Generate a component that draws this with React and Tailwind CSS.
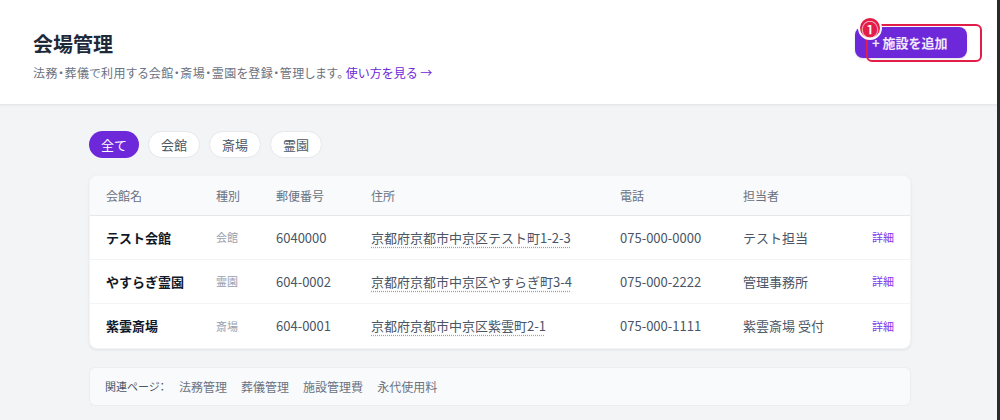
import { useState } from 'react';

const facilities = [
  {
    name: 'テスト会館',
    type: '会館',
    postal: '6040000',
    address: '京都府京都市中京区テスト町1-2-3',
    phone: '075-000-0000',
    contact: 'テスト担当',
  },
  {
    name: 'やすらぎ霊園',
    type: '霊園',
    postal: '604-0002',
    address: '京都府京都市中京区やすらぎ町3-4',
    phone: '075-000-2222',
    contact: '管理事務所',
  },
  {
    name: '紫雲斎場',
    type: '斎場',
    postal: '604-0001',
    address: '京都府京都市中京区紫雲町2-1',
    phone: '075-000-1111',
    contact: '紫雲斎場 受付',
  },
];

const filters = ['全て', '会館', '斎場', '霊園'];
const related = ['法務管理', '葬儀管理', '施設管理費', '永代使用料'];

const cols = 'grid grid-cols-[110px_60px_95px_249px_123px_1fr_auto] items-center px-4';

export default function App() {
  const [filter, setFilter] = useState('全て');

  return (
    <div
      className="relative min-h-[420px] bg-[#f3f4f6] text-gray-800"
      style={{ fontFamily: '"Noto Sans CJK JP", "Noto Sans", sans-serif' }}
    >
      {/* Header */}
      <header className="flex items-start justify-between border-b border-gray-200 bg-white pl-[33px] pr-[32px] h-[105px] shadow-[0_1px_2px_rgba(0,0,0,0.04)]">
        <div className="pt-[30px]">
          <h1 className="text-[20px] font-bold leading-7 text-gray-800">会場管理</h1>
          <p className="mt-[7px] text-[12px] leading-4 text-gray-500">
            <span className="tracking-[0.5px] [font-feature-settings:'palt']">
              法務・葬儀で利用する会館・斎場・霊園を登録・管理します。
            </span>
            <a href="#" className="ml-[2px] text-[#6d28d9]">使い方を見る →</a>
          </p>
        </div>

        <div className="relative mt-[27px] mr-[1px]">
          <button className="h-[31px] w-[112px] rounded-lg bg-[#6d28d9] pl-[17px] text-left text-[13px] font-bold text-white/90 shadow-sm">
            + 施設を追加
          </button>
          {/* annotation overlay */}
          <div className="absolute left-[11px] top-[-3px] h-[38px] w-[116px] rounded-md border-2 border-[#e11d48]" />
          <div className="absolute left-[3px] top-[-11px] flex h-[24px] w-[24px] items-center justify-center rounded-full border-2 border-white bg-[#e11d48] text-[17px] font-medium leading-none text-white">
            ①
          </div>
        </div>
      </header>

      {/* Main */}
      <main className="mx-auto w-[822px] pt-[26px]">
        <div className="flex gap-[9px]">
          {filters.map((f) => (
            <button
              key={f}
              onClick={() => setFilter(f)}
              className={
                filter === f
                  ? 'h-[27px] rounded-full bg-[#6d28d9] px-[12px] text-[13px] text-white'
                  : 'h-[27px] rounded-full border border-gray-200 bg-white px-[12px] text-[13px] text-gray-600'
              }
            >
              {f}
            </button>
          ))}
        </div>

        <div className="mt-[17px] overflow-hidden rounded-lg border border-gray-100 bg-white shadow-[0_1px_3px_rgba(0,0,0,0.08)]">
          <div className={`${cols} h-[40px] border-b border-gray-200 bg-gray-50 text-[12px] text-gray-500`}>
            <span>会館名</span>
            <span>種別</span>
            <span>郵便番号</span>
            <span>住所</span>
            <span>電話</span>
            <span>担当者</span>
            <span />
          </div>
          {facilities.map((f, i) => (
            <div
              key={f.name}
              className={`${cols} h-[44px] text-[13px] ${i < facilities.length - 1 ? 'border-b border-gray-100' : ''}`}
            >
              <span className="font-bold text-gray-900">{f.name}</span>
              <span className="text-[11px] text-gray-400">{f.type}</span>
              <span className="text-gray-600">{f.postal}</span>
              <span>
                <span className="text-gray-600 underline decoration-dotted decoration-gray-400 underline-offset-4">
                  {f.address}
                </span>
              </span>
              <span className="text-gray-600">{f.phone}</span>
              <span className="text-gray-600">{f.contact}</span>
              <a href="#" className="whitespace-nowrap text-right text-[11px] text-[#7c3aed]">詳細</a>
            </div>
          ))}
        </div>

        <div className="mt-[18px] flex h-[39px] items-center rounded-md border border-gray-200/70 bg-gray-50 px-[15px] text-[12px] text-gray-500">
          <span className="mr-[14px] text-[11px] text-gray-600 [font-feature-settings:'palt']">関連ページ：</span>
          <div className="flex gap-[14px]">
            {related.map((r) => (
              <a key={r} href="#" className="text-gray-500">{r}</a>
            ))}
          </div>
        </div>
      </main>

      {/* window edge */}
      <div className="absolute inset-y-0 right-0 w-[3px] bg-[#2b2b2b]" />
    </div>
  );
}
